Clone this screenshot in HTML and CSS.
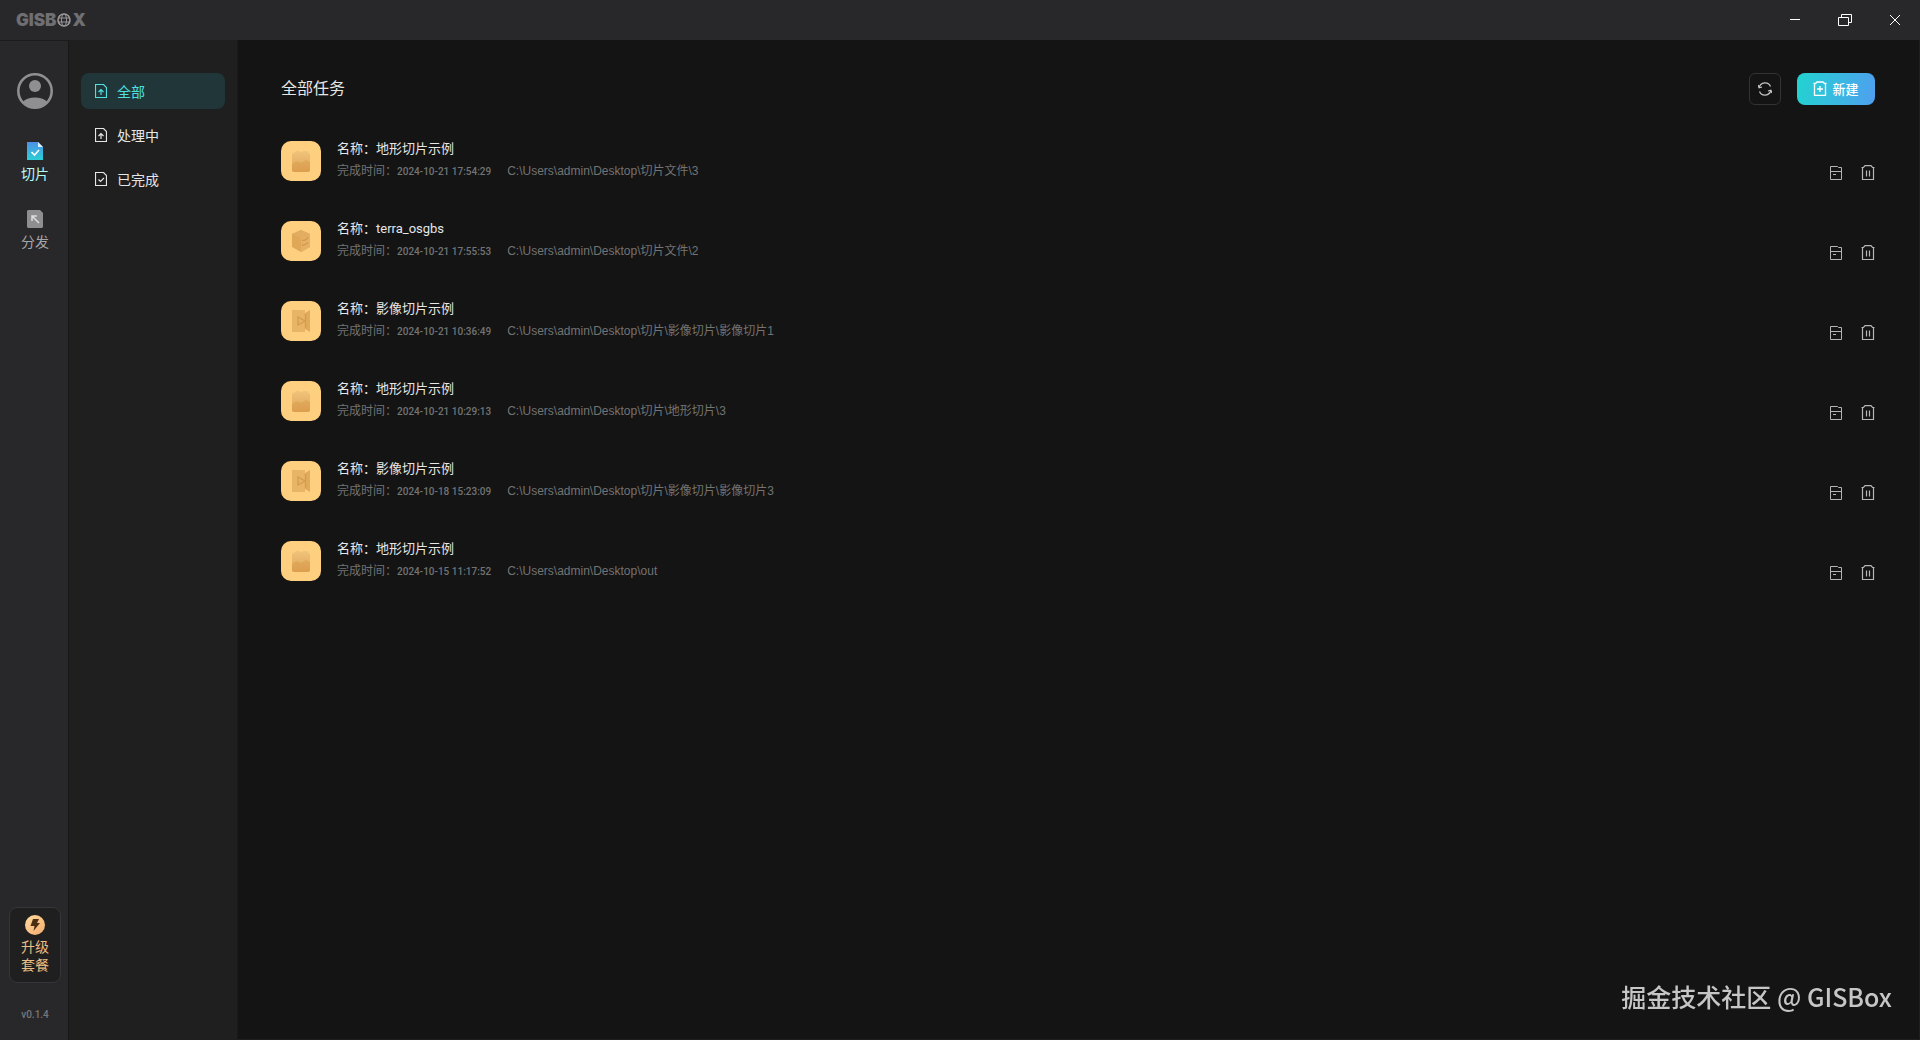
FILE: index.html
```html
<!DOCTYPE html>
<html lang="zh-CN">
<head>
  <meta charset="UTF-8">
  <meta name="viewport" content="width=device-width, initial-scale=1.0">
  <title>GISBox</title>
  <link rel="stylesheet" href="styles.css">
</head>
<body>

  <!-- Iconos compartidos -->
  <svg class="sprite" aria-hidden="true">
    <defs>
      <linearGradient id="grad-slice" x1="0" y1="0" x2="0" y2="1">
        <stop offset="0" stop-color="#4f8fe8"/>
        <stop offset="1" stop-color="#2bcfd6"/>
      </linearGradient>
      <linearGradient id="grad-tile" x1="0" y1="0" x2="0" y2="1">
        <stop offset="0" stop-color="#f0c47c"/>
        <stop offset="1" stop-color="#dda457"/>
      </linearGradient>
      <linearGradient id="grad-gold" x1="0" y1="0" x2="1" y2="1">
        <stop offset="0" stop-color="#ffdc9e"/>
        <stop offset="1" stop-color="#f3ab6c"/>
      </linearGradient>
    </defs>
    <symbol id="i-upload" viewBox="0 0 12 14">
      <path d="M.5.5h8l3 3v10H.5z" fill="none" stroke="currentColor" stroke-width="1.2"/>
      <path d="M6 11V6M3.5 8 6 5.5 8.5 8" fill="none" stroke="currentColor" stroke-width="1.2"/>
    </symbol>
    <symbol id="i-done" viewBox="0 0 12 14">
      <path d="M.5.5h8l3 3v10H.5z" fill="none" stroke="currentColor" stroke-width="1.2"/>
      <path d="M3.5 7.5 5.5 9.5 9 6" fill="none" stroke="currentColor" stroke-width="1.2"/>
    </symbol>
    <symbol id="i-folder" viewBox="0 0 12 14">
      <path d="M.5 13.5V.5h7L8.500 1.500h3v12zM.5 5.500h11M3 8.500h3" fill="none" stroke="currentColor"/>
    </symbol>
    <symbol id="i-trash" viewBox="0 0 14 15">
      <path d="M1.500 3v11.500h11V3M.5 2.500h2L4 .7h6l1.500 1.800h2M5.500 5.500v6M8.500 5.500v6" fill="none" stroke="currentColor" stroke-width="1.200"/>
    </symbol>
    <symbol id="i-terrain" viewBox="0 0 18 22">
      <path d="M0 4 4 1h3l2 1 3-1h3l3 3v16a2 2 0 0 1-2 2H2a2 2 0 0 1-2-2z" fill="url(#grad-tile)"/>
      <path d="M0 14 5 11l4 2 5-3 4 2v8a2 2 0 0 1-2 2H2a2 2 0 0 1-2-2z" fill="#d99743" opacity=".4"/>
    </symbol>
    <symbol id="i-model" viewBox="0 0 18 22">
      <path d="M9 0 18 4v13l-9 5-9-5V4z" fill="#dfa859"/>
      <path d="M0 4 9 8l9-4-9-4z" fill="#e2ad60"/>
      <path d="M9 8v14l9-5V4z" fill="#e5b166"/>
      <path d="M10 10c3 1 5-1 6-3M10 15c3 1 4-2 6-2" fill="none" stroke="#d49b4b" stroke-width="1.5"/>
    </symbol>
    <symbol id="i-image" viewBox="0 0 18 22">
      <path d="M0 0h13v22H0z" fill="#e8b466"/>
      <path d="M13 3 18 0v22l-5-3z" fill="#e0ac5c"/>
      <path d="M6 7 13 11 6 15zM13.500 4v14" fill="none" stroke="#d49c4b" stroke-width="1.3"/>
    </symbol>
  </svg>

  <header class="titlebar">
    <div class="logo">
      <span>GISB</span>
      <svg class="logo-globe" viewBox="0 0 14 14" fill="none" stroke="currentColor">
        <circle cx="7" cy="7" r="6" stroke-width="1.600"/>
        <ellipse cx="7" cy="7" rx="2.500" ry="6"/>
        <path d="M1 5h12M1 9h12"/>
      </svg>
      <span>X</span>
    </div>
    <div class="window-controls">
      <button type="button" aria-label="最小化">
        <svg width="10" height="12" viewBox="0 0 10 12"><path d="M0 5.500h10" stroke="currentColor"/></svg>
      </button>
      <button type="button" aria-label="还原">
        <svg width="14" height="12" viewBox="0 0 14 12" fill="none" stroke="currentColor"><path d="M.5 3.500h10v8H.5zM3.500 3.500v-3h10v8h-3"/></svg>
      </button>
      <button type="button" aria-label="关闭">
        <svg width="10" height="10" viewBox="0 0 10 10" stroke="currentColor"><path d="M0 0 10 10M10 0 0 10"/></svg>
      </button>
    </div>
  </header>

  <div class="layout">
    <nav class="rail">
      <button type="button" class="avatar" aria-label="用户">
        <svg width="36" height="36" viewBox="0 0 36 36">
          <circle cx="18" cy="18" r="16.700" fill="none" stroke="currentColor" stroke-width="2.600"/>
          <circle cx="18" cy="13" r="6" fill="currentColor"/>
          <path d="M6 28.500C9 26 13 24.500 18 24.500s9 1.500 12 4C27 32.500 23 35 18 35S9 32.500 6 28.500z" fill="currentColor"/>
        </svg>
      </button>
      <a href="#" class="rail-item active">
        <svg width="16" height="18" viewBox="0 0 16 18">
          <path d="M0 0h11l5 5v13H0z" fill="url(#grad-slice)"/>
          <path d="M11 0v5h5z" fill="#d8f2ff"/>
          <path d="M4.500 10 7.500 13 12 8" fill="none" stroke="#fff" stroke-width="1.600"/>
        </svg>
        <span>切片</span>
      </a>
      <a href="#" class="rail-item">
        <svg width="16" height="18" viewBox="0 0 16 18">
          <path d="M1 0h12l3 3v14l-1 1H1l-1-1V1z" fill="#8e8e90"/>
          <path d="M12 13 5 6M5 11V6h5" fill="none" stroke="#ddd" stroke-width="1.500"/>
        </svg>
        <span>分发</span>
      </a>
      <button type="button" class="upgrade">
        <svg width="20" height="20" viewBox="0 0 20 20">
          <circle cx="10" cy="10" r="10" fill="url(#grad-gold)"/>
          <path d="M8 4h6l-2 4h3l-6.500 8 1-5H5.500z" fill="#4a2f12"/>
        </svg>
        <span>升级<br>套餐</span>
      </button>
      <span class="version">v0.1.4</span>
    </nav>

    <aside class="submenu">
      <a href="#" class="submenu-item active"><svg class="icon-file"><use href="#i-upload"/></svg>全部</a>
      <a href="#" class="submenu-item"><svg class="icon-file"><use href="#i-upload"/></svg>处理中</a>
      <a href="#" class="submenu-item"><svg class="icon-file"><use href="#i-done"/></svg>已完成</a>
    </aside>

    <main class="content">
      <div class="content-head">
        <h1>全部任务</h1>
        <div class="head-actions">
          <button type="button" class="btn-refresh" aria-label="刷新">
            <svg width="14" height="14" viewBox="0 0 14 14" fill="none" stroke="currentColor" stroke-width="1.300">
              <path d="M1.200 5.500A6 6 0 0 1 12.500 4.500M12.800 8.500A6 6 0 0 1 1.500 9.500"/>
              <path d="M0 3 1.200 5.800 4 5M14 11l-1.200-2.800L10 9"/>
            </svg>
          </button>
          <button type="button" class="btn-new">
            <svg width="14" height="15" viewBox="0 0 14 15" fill="none" stroke="currentColor" stroke-width="1.300">
              <path d="M1.500 3.500v11h11v-11M.5 2.500h2L4 1h6l1.500 1.500h2M7 5v6M4 8h6"/>
            </svg>
            新建
          </button>
        </div>
      </div>

      <ul class="tasks">
        <li class="task">
          <span class="task-icon"><svg><use href="#i-terrain"/></svg></span>
          <div class="task-info">
            <p class="task-name">名称：地形切片示例</p>
            <p class="task-meta"><span>完成时间：<time>2024-10-21 17:54:29</time></span><span>C:\Users\admin\Desktop\切片文件\3</span></p>
          </div>
          <div class="task-actions">
            <button type="button" aria-label="打开文件夹"><svg class="icon-file"><use href="#i-folder"/></svg></button>
            <button type="button" aria-label="删除"><svg class="icon-trash"><use href="#i-trash"/></svg></button>
          </div>
        </li>
        <li class="task">
          <span class="task-icon"><svg><use href="#i-model"/></svg></span>
          <div class="task-info">
            <p class="task-name">名称：terra_osgbs</p>
            <p class="task-meta"><span>完成时间：<time>2024-10-21 17:55:53</time></span><span>C:\Users\admin\Desktop\切片文件\2</span></p>
          </div>
          <div class="task-actions">
            <button type="button" aria-label="打开文件夹"><svg class="icon-file"><use href="#i-folder"/></svg></button>
            <button type="button" aria-label="删除"><svg class="icon-trash"><use href="#i-trash"/></svg></button>
          </div>
        </li>
        <li class="task">
          <span class="task-icon"><svg><use href="#i-image"/></svg></span>
          <div class="task-info">
            <p class="task-name">名称：影像切片示例</p>
            <p class="task-meta"><span>完成时间：<time>2024-10-21 10:36:49</time></span><span>C:\Users\admin\Desktop\切片\影像切片\影像切片1</span></p>
          </div>
          <div class="task-actions">
            <button type="button" aria-label="打开文件夹"><svg class="icon-file"><use href="#i-folder"/></svg></button>
            <button type="button" aria-label="删除"><svg class="icon-trash"><use href="#i-trash"/></svg></button>
          </div>
        </li>
        <li class="task">
          <span class="task-icon"><svg><use href="#i-terrain"/></svg></span>
          <div class="task-info">
            <p class="task-name">名称：地形切片示例</p>
            <p class="task-meta"><span>完成时间：<time>2024-10-21 10:29:13</time></span><span>C:\Users\admin\Desktop\切片\地形切片\3</span></p>
          </div>
          <div class="task-actions">
            <button type="button" aria-label="打开文件夹"><svg class="icon-file"><use href="#i-folder"/></svg></button>
            <button type="button" aria-label="删除"><svg class="icon-trash"><use href="#i-trash"/></svg></button>
          </div>
        </li>
        <li class="task">
          <span class="task-icon"><svg><use href="#i-image"/></svg></span>
          <div class="task-info">
            <p class="task-name">名称：影像切片示例</p>
            <p class="task-meta"><span>完成时间：<time>2024-10-18 15:23:09</time></span><span>C:\Users\admin\Desktop\切片\影像切片\影像切片3</span></p>
          </div>
          <div class="task-actions">
            <button type="button" aria-label="打开文件夹"><svg class="icon-file"><use href="#i-folder"/></svg></button>
            <button type="button" aria-label="删除"><svg class="icon-trash"><use href="#i-trash"/></svg></button>
          </div>
        </li>
        <li class="task">
          <span class="task-icon"><svg><use href="#i-terrain"/></svg></span>
          <div class="task-info">
            <p class="task-name">名称：地形切片示例</p>
            <p class="task-meta"><span>完成时间：<time>2024-10-15 11:17:52</time></span><span>C:\Users\admin\Desktop\out</span></p>
          </div>
          <div class="task-actions">
            <button type="button" aria-label="打开文件夹"><svg class="icon-file"><use href="#i-folder"/></svg></button>
            <button type="button" aria-label="删除"><svg class="icon-trash"><use href="#i-trash"/></svg></button>
          </div>
        </li>
      </ul>
    </main>
  </div>

  <div class="watermark">掘金技术社区 @ GISBox</div>

</body>
</html>
```
FILE: styles.css
```css
* {
  box-sizing: border-box;
}

body {
  margin: 0;
  min-height: 100vh;
  display: flex;
  flex-direction: column;
  background-color: #141414;
  color: #e6e6e6;
  font-family: Roboto, "Noto Sans CJK SC", sans-serif;
  font-size: 14px;
}

h1, p, ul {
  margin: 0;
  padding: 0;
}

a {
  color: inherit;
  text-decoration: none;
}

button {
  padding: 0;
  border: none;
  background: none;
  color: inherit;
  font: inherit;
  cursor: pointer;
}

svg {
  display: block;
}

.sprite {
  position: absolute;
  width: 0;
  height: 0;
}

.icon-file {
  width: 12px;
  height: 14px;
}

.icon-trash {
  width: 14px;
  height: 15px;
}

/* Barra de título */
.titlebar {
  display: flex;
  justify-content: space-between;
  height: 40px;
  padding-left: 16px;
  background-color: #28282b;
}

.logo {
  display: flex;
  align-items: center;
  gap: 1px;
  color: #6f6f72;
  font-family: Inter, sans-serif;
  font-size: 17px;
  font-weight: 900;
}

.logo-globe {
  width: 14px;
  height: 14px;
  color: #98989a;
}

.window-controls {
  display: flex;
}

.window-controls button {
  display: flex;
  align-items: center;
  justify-content: center;
  width: 50px;
  color: #fff;
}

.layout {
  flex: 1;
  display: flex;
}

/* Barra lateral izquierda */
.rail {
  display: flex;
  flex-direction: column;
  align-items: center;
  width: 69px;
  padding: 32px 0 15px 2px;
  border-top: 1px solid #1b1b1c;
  border-right: 1px solid #171717;
  background-color: #28282b;
}

.avatar {
  margin-bottom: 33px;
  color: #8f8f91;
}

.rail-item {
  display: flex;
  flex-direction: column;
  align-items: center;
  gap: 4px;
  height: 68px;
  line-height: 20px;
  color: #a5a5a7;
}

.rail-item.active {
  color: #b4fbf3;
}

.upgrade {
  display: flex;
  flex-direction: column;
  align-items: center;
  gap: 3px;
  width: 52px;
  height: 76px;
  margin-top: auto;
  margin-bottom: 22px;
  border: 1px solid #36363a;
  border-radius: 8px;
  padding-top: 7px;
  background-color: #1f1f20;
  color: #e9bd83;
  line-height: 18px;
}

.version {
  color: #77777a;
  font-size: 10px;
  font-weight: 500;
  line-height: 20px;
}

/* Submenú */
.submenu {
  display: flex;
  flex-direction: column;
  gap: 8px;
  width: 169px;
  padding: 33px 12px 0 12px;
  border-right: 1px solid #1a1a1a;
  background-color: #1f1f1f;
}

.submenu-item {
  display: flex;
  align-items: center;
  gap: 10px;
  height: 36px;
  padding-left: 14px;
  padding-bottom: 1px;
  border-radius: 8px;
}

.submenu-item.active {
  background-color: #203639;
  color: #4fe0e0;
}

/* Contenido */
.content {
  flex: 1;
  padding: 33px 44px 33px 43px;
  border-right: 1px solid #1f1f20;
  border-bottom: 1px solid #1f1f20;
}

.content-head {
  display: flex;
  align-items: center;
  justify-content: space-between;
  margin-bottom: 36px;
}

.content-head h1 {
  font-size: 16px;
  font-weight: 400;
  line-height: 32px;
}

.head-actions {
  display: flex;
  gap: 16px;
}

.btn-refresh,
.btn-new {
  display: flex;
  align-items: center;
  justify-content: center;
  height: 32px;
  border-radius: 8px;
}

.btn-refresh {
  width: 32px;
  border: 1px solid #333;
  border-radius: 6px;
  color: #c4c4c4;
}

.btn-new {
  gap: 5px;
  width: 78px;
  padding-bottom: 1px;
  background: linear-gradient(100deg, #22d3d0, #4f9ff0);
  color: #fff;
  font-size: 13px;
  font-weight: 500;
}

.tasks {
  display: flex;
  flex-direction: column;
  gap: 40px;
  list-style: none;
}

.task {
  display: flex;
  align-items: center;
  gap: 16px;
  height: 40px;
}

.task-icon {
  display: flex;
  align-items: center;
  justify-content: center;
  width: 40px;
  height: 40px;
  border-radius: 10px;
  background-color: #ffcf80;
}

.task-icon svg {
  width: 18px;
  height: 22px;
}

.task-info {
  flex: 1;
  padding-bottom: 2px;
}

.task-name {
  font-size: 13px;
  line-height: 22px;
}

.task-meta {
  display: flex;
  gap: 16px;
  color: #737373;
  font-family: "Liberation Sans", "Noto Sans CJK SC", sans-serif;
  font-size: 12px;
  line-height: 22px;
}

.task-meta time {
  font-family: Roboto, sans-serif;
  font-size: 10px;
  font-weight: 500;
}

.task-actions {
  display: flex;
  align-items: center;
  align-self: flex-end;
  gap: 19px;
  padding-bottom: 1px;
  color: #b5b5b5;
}

/* Marca de agua */
.watermark {
  position: fixed;
  right: 28px;
  bottom: 26px;
  color: #c6c6c6;
  font-family: "Noto Sans CJK SC", sans-serif;
  font-size: 25px;
  font-weight: 500;
  line-height: 36px;
}
```
